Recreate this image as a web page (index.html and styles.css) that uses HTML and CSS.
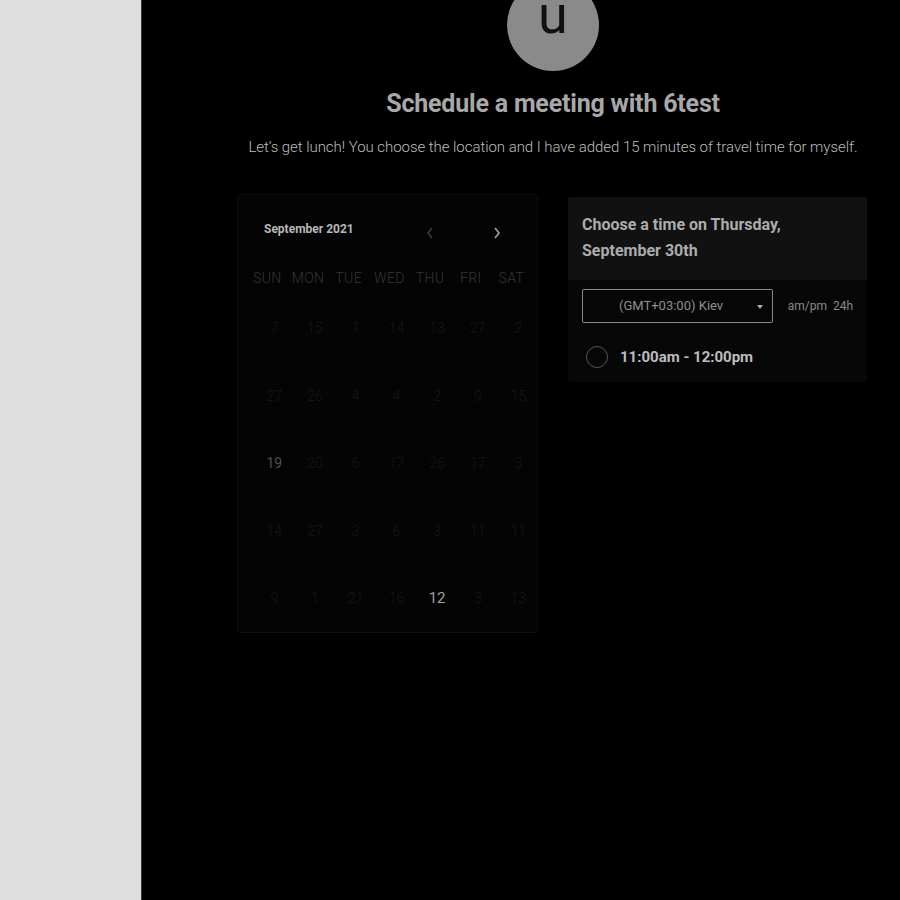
FILE: index.html
```html
<!DOCTYPE html>
<html>
<head>
<meta charset="utf-8">
<link rel="stylesheet" href="styles.css">
</head>
<body>
<div class="app">
  <aside class="sidebar"></aside>
  <main class="main">
    <div class="content">
      <div class="avatar">u</div>
      <h1 class="title">Schedule a meeting with 6test</h1>
      <p class="desc">Let’s get lunch! You choose the location and I have added 15 minutes of travel time for myself.</p>
      <div class="columns">
        <section class="calendar">
          <div class="cal-head">
            <span class="month">September 2021</span>
            <div class="arrows">
              <svg class="arrow dim" width="10" height="14" viewBox="0 0 10 14"><path d="M7 2 L3 7 L7 12" fill="none" stroke="currentColor" stroke-width="1.6"/></svg>
              <svg class="arrow" width="10" height="14" viewBox="0 0 10 14"><path d="M3 2 L7 7 L3 12" fill="none" stroke="currentColor" stroke-width="1.8"/></svg>
            </div>
          </div>
          <div class="grid weekdays">
            <span>SUN</span><span>MON</span><span>TUE</span><span>WED</span><span>THU</span><span>FRI</span><span>SAT</span>
          </div>
          <div class="grid days">
            <span>7</span><span>15</span><span>1</span><span>14</span><span>13</span><span>27</span><span>2</span>
            <span>27</span><span>26</span><span>4</span><span>4</span><span>2</span><span>9</span><span>15</span>
            <span class="mid">19</span><span>20</span><span>6</span><span>17</span><span>26</span><span>17</span><span>3</span>
            <span>14</span><span>27</span><span>3</span><span>6</span><span>3</span><span>11</span><span>11</span>
            <span>9</span><span>1</span><span>21</span><span>16</span><span class="hi">12</span><span>3</span><span>13</span>
          </div>
        </section>
        <section class="times">
          <div class="times-head">Choose a time on Thursday,<br>September 30th</div>
          <div class="times-body">
            <div class="tz-row">
              <div class="select">(GMT+03:00) Kiev<span class="caret"></span></div>
              <span class="fmt">am/pm&nbsp;&nbsp;24h</span>
            </div>
            <div class="slot">
              <span class="radio"></span>
              <span class="slot-text">11:00am - 12:00pm</span>
            </div>
          </div>
        </section>
      </div>
    </div>
  </main>
</div>
</body>
</html>
```
FILE: styles.css
```css
html, body {
  margin: 0;
  padding: 0;
  height: 100%;
  background: #000;
  font-family: Roboto, "Liberation Sans", sans-serif;
}
.app {
  display: flex;
  height: 900px;
  overflow: hidden;
}
.sidebar {
  width: 141px;
  flex: none;
  background: #dedede;
  border-right: 1px solid #3a3a3a;
}
.main {
  flex: 1;
  background: #000;
  padding-left: 95px;
}
.content {
  width: 632px;
  display: flex;
  flex-direction: column;
  align-items: center;
}
.avatar {
  width: 92px;
  height: 92px;
  margin-top: -21px;
  border-radius: 50%;
  background: #8a8a8a;
  color: #111;
  font-size: 54px;
  line-height: 29px;
  text-align: center;
  font-weight: 400;
  box-sizing: border-box;
  padding-top: 21px;
}
.title {
  margin: 20px 0 0;
  font-size: 25px;
  font-weight: 700;
  color: #a8a8a8;
  line-height: 26px;
  letter-spacing: -0.2px;
}
.desc {
  margin: 20px 0 0;
  font-size: 15px;
  font-weight: 300;
  color: #bdbdbd;
  line-height: 20px;
  white-space: nowrap;
  letter-spacing: -0.05px;
}
.columns {
  align-self: stretch;
  display: flex;
  gap: 30px;
  margin-top: 37px;
}
.calendar {
  width: 301px;
  height: 439px;
  box-sizing: border-box;
  background: #040404;
  border: 1px solid #0e0e0e;
  border-radius: 3px;
  padding: 24px 7px 0 9px;
}
.cal-head {
  display: flex;
  align-items: center;
  padding-left: 17px;
  height: 20px;
}
.month {
  font-size: 12px;
  font-weight: 700;
  color: #b8b8b8;
}
.arrows {
  display: flex;
  gap: 57px;
  margin-left: 71px;
  margin-top: 8px;
}
.arrow { color: #9a9a9a; }
.arrow.dim { color: #3c3c3c; }
.grid {
  display: grid;
  grid-template-columns: repeat(7, 40.7px);
}
.weekdays {
  margin-top: 29px;
  font-size: 14px;
  font-weight: 300;
  color: #363636;
  text-align: center;
  letter-spacing: 0.4px;
}
.weekdays span { line-height: 20px; }
.days {
  margin-top: 30px;
  grid-auto-rows: 67.5px;
  font-size: 14px;
  font-weight: 300;
  color: #171717;
}
.days span {
  text-align: center;
  padding-left: 14px;
  line-height: 20px;
}
.days .mid { color: #505050; font-weight: 400; }
.days .hi { color: #a0a0a0; font-weight: 400; font-size: 15px; }
.times {
  width: 299px;
  margin-top: 3px;
  align-self: flex-start;
  background: #070707;
  border-radius: 3px;
  overflow: hidden;
}
.times-head {
  background: #111;
  padding: 15px 14px 16px;
  font-size: 16px;
  font-weight: 700;
  color: #acacac;
  line-height: 26px;
}
.times-body {
  padding: 9px 14px 14px;
}
.tz-row {
  display: flex;
  align-items: center;
}
.select {
  position: relative;
  width: 191px;
  height: 34px;
  box-sizing: border-box;
  border: 1px solid #8a8a8a;
  border-radius: 2px;
  font-size: 13px;
  color: #8e8e8e;
  line-height: 32px;
  padding-left: 36px;
}
.caret {
  position: absolute;
  right: 9px;
  top: 15px;
  border-left: 3.5px solid transparent;
  border-right: 3.5px solid transparent;
  border-top: 4px solid #aaa;
}
.fmt {
  margin-left: 15px;
  font-size: 12px;
  color: #8a8a8a;
}
.slot {
  display: flex;
  align-items: center;
  margin-top: 23px;
  padding-left: 4px;
}
.radio {
  width: 20px;
  height: 20px;
  border: 1.5px solid #555;
  border-radius: 50%;
}
.slot-text {
  margin-left: 12px;
  font-size: 15px;
  font-weight: 700;
  color: #bdbdbd;
}
```
